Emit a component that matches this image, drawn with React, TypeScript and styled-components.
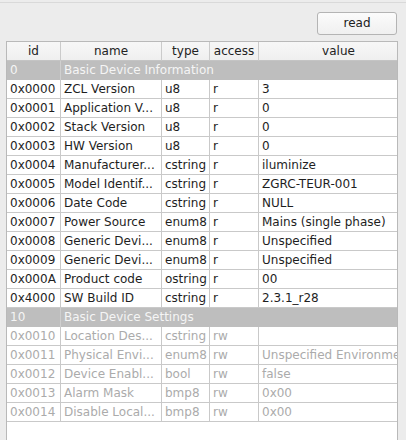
import React from "react";
import styled, { createGlobalStyle, css } from "styled-components";

const Global = createGlobalStyle`
  html, body {
    margin: 0;
    padding: 0;
    background: #ececec;
    font-family: "DejaVu Sans", "Liberation Sans", sans-serif;
    font-size: 12px;
    color: #202020;
  }
`;

const Page = styled.div`
  width: 406px;
  height: 440px;
  overflow: hidden;
  display: flex;
  flex-direction: column;
`;

const TopLine = styled.div`
  margin-top: 2px;
  height: 1px;
  background: #d9d9d9;
`;

const Toolbar = styled.div`
  display: flex;
  justify-content: flex-end;
  padding: 9px 9px 6px 0;
`;

const Button = styled.button`
  width: 80px;
  height: 23px;
  box-sizing: border-box;
  border: 1px solid #b4b4b4;
  border-radius: 3px;
  background: linear-gradient(#fbfbfb, #f0f0f0);
  font-family: "DejaVu Sans", sans-serif;
  font-size: 12px;
  color: #202020;
  padding: 0 0 1px 0;
`;

const Table = styled.div`
  margin-left: 6px;
  width: 392px;
  flex: 1;
  box-sizing: border-box;
  border: 1px solid #b9b9b9;
  border-bottom: none;
  background: #ffffff;
  overflow: hidden;
`;

const cols = "54px 101px 48px 49px 160px";

const Row = styled.div`
  display: grid;
  grid-template-columns: ${cols};
  width: 412px;
`;

const HeadCell = styled.div`
  box-sizing: border-box;
  height: 19px;
  line-height: 18px;
  text-align: center;
  border-right: 1px solid #cbcbcb;
  border-bottom: 1px solid #c4c4c4;
  background: linear-gradient(#f7f7f7, #efefef);
  color: #222;
  white-space: nowrap;
  overflow: hidden;
`;

const Cell = styled.div<{ $dim?: boolean }>`
  box-sizing: border-box;
  height: 19px;
  line-height: 18px;
  padding-left: 3px;
  border-right: 1px solid #c9c9c9;
  border-bottom: 1px solid #c9c9c9;
  white-space: nowrap;
  overflow: hidden;
  color: ${(p) => (p.$dim ? "#ababab" : "#1e1e1e")};
`;

const GroupRow = styled.div`
  display: grid;
  grid-template-columns: 54px 1fr;
  width: 412px;
  background: #bebebe;
  color: #f5f5f5;
  height: 19px;
  line-height: 18px;
`;

const GroupCell = styled.div<{ $first?: boolean }>`
  padding-left: 3px;
  white-space: nowrap;
  ${(p) =>
    p.$first &&
    css`
      border-right: 1px solid #cfcfcf;
    `}
`;

type Attr = [string, string, string, string, string];

const basic: Attr[] = [
  ["0x0000", "ZCL Version", "u8", "r", "3"],
  ["0x0001", "Application V...", "u8", "r", "0"],
  ["0x0002", "Stack Version", "u8", "r", "0"],
  ["0x0003", "HW Version", "u8", "r", "0"],
  ["0x0004", "Manufacturer...", "cstring", "r", "iluminize"],
  ["0x0005", "Model Identif...", "cstring", "r", "ZGRC-TEUR-001"],
  ["0x0006", "Date Code", "cstring", "r", "NULL"],
  ["0x0007", "Power Source", "enum8", "r", "Mains (single phase)"],
  ["0x0008", "Generic Devi...", "enum8", "r", "Unspecified"],
  ["0x0009", "Generic Devi...", "enum8", "r", "Unspecified"],
  ["0x000A", "Product code", "ostring", "r", "00"],
  ["0x4000", "SW Build ID", "cstring", "r", "2.3.1_r28"],
];

const settings: Attr[] = [
  ["0x0010", "Location Des...", "cstring", "rw", ""],
  ["0x0011", "Physical Envi...", "enum8", "rw", "Unspecified Environment"],
  ["0x0012", "Device Enabl...", "bool", "rw", "false"],
  ["0x0013", "Alarm Mask", "bmp8", "rw", "0x00"],
  ["0x0014", "Disable Local...", "bmp8", "rw", "0x00"],
];

const DataRow = ({ a, dim }: { a: Attr; dim?: boolean }) => (
  <Row>
    {a.map((v, i) => (
      <Cell key={i} $dim={dim}>
        {v}
      </Cell>
    ))}
  </Row>
);

export default function App() {
  return (
    <Page>
      <Global />
      <TopLine />
      <Toolbar>
        <Button>read</Button>
      </Toolbar>
      <Table>
        <Row>
          {["id", "name", "type", "access", "value"].map((h) => (
            <HeadCell key={h}>{h}</HeadCell>
          ))}
        </Row>
        <GroupRow>
          <GroupCell $first>0</GroupCell>
          <GroupCell>Basic Device Information</GroupCell>
        </GroupRow>
        {basic.map((a) => (
          <DataRow key={a[0]} a={a} />
        ))}
        <GroupRow>
          <GroupCell $first>10</GroupCell>
          <GroupCell>Basic Device Settings</GroupCell>
        </GroupRow>
        {settings.map((a) => (
          <DataRow key={a[0]} a={a} dim />
        ))}
      </Table>
    </Page>
  );
}
